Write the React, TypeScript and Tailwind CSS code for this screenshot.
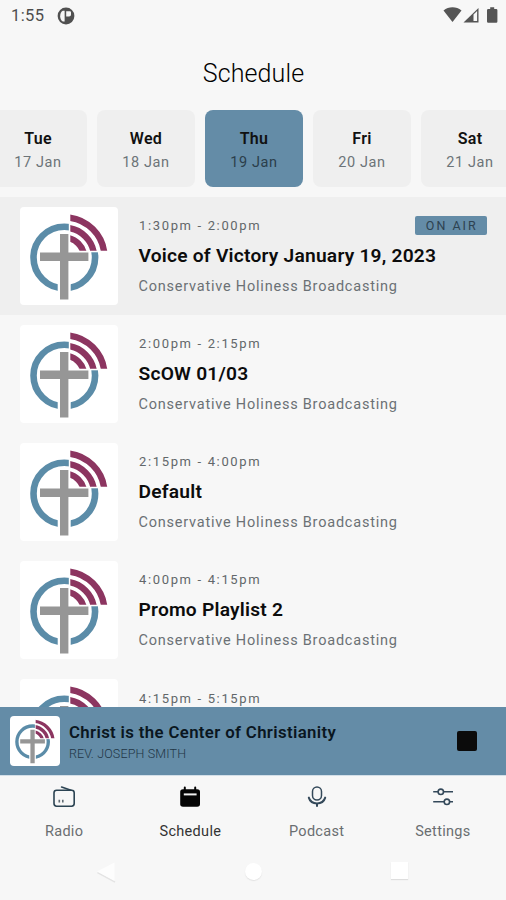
import clsx from "clsx";

const days = [
  { name: "Tue", date: "17 Jan" },
  { name: "Wed", date: "18 Jan" },
  { name: "Thu", date: "19 Jan", active: true },
  { name: "Fri", date: "20 Jan" },
  { name: "Sat", date: "21 Jan" },
];

const shows = [
  { time: "1:30pm - 2:00pm", title: "Voice of Victory January 19, 2023", onAir: true },
  { time: "2:00pm - 2:15pm", title: "ScOW 01/03" },
  { time: "2:15pm - 4:00pm", title: "Default" },
  { time: "4:00pm - 4:15pm", title: "Promo Playlist 2" },
  { time: "4:15pm - 5:15pm" },
];

const tabs = [
  { label: "Radio", icon: RadioIcon },
  { label: "Schedule", icon: ScheduleIcon, active: true },
  { label: "Podcast", icon: PodcastIcon },
  { label: "Settings", icon: SettingsIcon },
];

function Logo({ className }: { className?: string }) {
  return (
    <svg viewBox="0 0 98 98" className={className}>
      <circle cx="44.3" cy="50.5" r="30.8" fill="none" stroke="#5b8ca8" strokeWidth="6.6" />
      <rect x="37.7" y="70" width="13" height="27" fill="#fff" />
      <rect x="48.8" y="2" width="47" height="43.3" fill="#fff" />
      <path d="M40 27h8.4v18.5h20V54h-20v38.6H40V54H20v-8.5h20z" fill="#969696" />
      <svg x="50.3" y="0" width="47" height="43.8" viewBox="50.3 0 47 43.8">
        <g fill="none" stroke="#8c3560" strokeWidth="6.4">
          <circle cx="44.3" cy="50.5" r="40.2" />
          <circle cx="44.3" cy="50.5" r="29.8" />
          <circle cx="44.3" cy="50.5" r="19.8" />
        </g>
      </svg>
    </svg>
  );
}

function RadioIcon() {
  return (
    <svg width="24" height="24" viewBox="0 0 24 24" fill="none" stroke="#2c4453" strokeWidth="1.6">
      <rect x="2" y="5.2" width="20.2" height="16" rx="2.6" />
      <path d="M9.6 2l9.4 3.3" strokeLinecap="round" />
      <path d="M7.3 14.8v2.8M10.8 14.8v2.8" stroke="#5f6b73" />
    </svg>
  );
}

function ScheduleIcon() {
  return (
    <svg width="24" height="24" viewBox="0 0 24 24">
      <path d="M6.8 2.6v4M17.2 2.6v4" stroke="#050505" strokeWidth="2" strokeLinecap="round" />
      <rect x="2.2" y="4.2" width="19.8" height="17.6" rx="2.8" fill="#050505" />
      <path d="M5.8 9.4h12.8" stroke="#f1f1f1" strokeWidth="2" />
    </svg>
  );
}

function PodcastIcon() {
  return (
    <svg width="24" height="24" viewBox="0 0 24 24" fill="none" stroke="#34495a" strokeWidth="1.5">
      <rect x="7.5" y="2" width="9" height="13" rx="4.5" />
      <path d="M3.8 12.6c1.2 4 4.4 5.800 8.200 5.800s7-1.800 8.200-5.800" strokeWidth="2" strokeLinecap="round" />
      <path d="M12 18.6v3.2" strokeWidth="2" />
    </svg>
  );
}

function SettingsIcon() {
  return (
    <svg width="24" height="24" viewBox="0 0 24 24" fill="none" stroke="#34495a" strokeWidth="1.6">
      <path d="M2.2 6.8h4.8M12.6 6.8h9.4" />
      <circle cx="9.8" cy="6.8" r="2.7" />
      <path d="M2.2 16.8h10.8M18.6 16.8h3.4" />
      <circle cx="15.9" cy="16.8" r="2.7" />
    </svg>
  );
}

function StatusBar() {
  return (
    <div className="flex h-8 shrink-0 items-center pr-[7px] pl-[11px] text-[#4d4d4d]">
      <span className="text-[16.5px] tracking-[0.4px]">1:55</span>
      <svg className="-mt-px ml-[13px]" width="18" height="18" viewBox="0 0 18 18">
        <circle cx="9" cy="9" r="8.4" fill="#505050" />
        <path d="M7.6 3.8v10.6H5.8c-1.6-.8-2.6-2.6-2.6-5.2s1-4.6 2.6-5.4z" fill="#f7f7f7" />
        <path d="M9.2 4.2h3.6c.9 0 1.2.6 1.2 1.4v2c0 1.2-.8 2-2 2H9.2z" fill="#f7f7f7" />
      </svg>
      <svg className="-mt-0.5 ml-auto" width="56" height="18" viewBox="0 0 56 18" fill="#555">
        <path d="M.5 4.6C3.2 2.4 6.2 1.3 9.5 1.3s6.3 1.100 9 3.300L9.500 16z" />
        <path d="M20.5 16.5L35.5 2v14.5z" />
        <path d="M30.5 8.5l3.6-3.5v10.1h-3.6z" fill="#f7f7f7" />
        <path d="M44 4.2q0-1.2 1.2-1.2h2V1.2h4V3h2q1.2 0 1.2 1.2v11.3q0 1.2-1.2 1.2h-8q-1.2 0-1.2-1.2z" />
      </svg>
    </div>
  );
}

export default function App() {
  return (
    <div className="flex h-[900px] w-[506px] flex-col overflow-hidden bg-[#f7f7f7] font-[Roboto,sans-serif]">
      <StatusBar />
      <h1 className="h-[77.5px] shrink-0 pt-[24px] pl-px text-center text-[25px] leading-9 font-light tracking-[0.1px] text-black">
        Schedule
      </h1>

      <div className="-ml-[11px] flex h-[87.5px] shrink-0 gap-[10px]">
        {days.map((day) => (
          <div
            key={day.name}
            className={clsx(
              "flex h-[77.5px] w-[98px] shrink-0 flex-col items-center rounded-lg pt-[17px]",
              day.active ? "bg-[#648ca7]" : "bg-[#efefef]"
            )}
          >
            <p className="text-[16px] leading-6 font-semibold tracking-[0.3px] text-[#111]">{day.name}</p>
            <p
              className={clsx(
                "text-[14.5px] leading-6 tracking-[0.6px]",
                day.active ? "text-[#2b3e4b]" : "text-[#6c7478]"
              )}
            >
              {day.date}
            </p>
          </div>
        ))}
      </div>

      <div className="h-[509.5px] shrink-0 overflow-hidden">
        {shows.map((show) => (
          <div
            key={show.time}
            className={clsx("flex h-[118.2px] gap-5 pt-[9.5px] pr-[19px] pl-5", show.onAir && "bg-[#efefef]")}
          >
            <div className="size-[98px] shrink-0 rounded-[4px] bg-white">
              <Logo className="size-full" />
            </div>
            <div className="min-w-0 grow pt-[9px]">
              <div className="flex h-5 items-center justify-between">
                <span className="pl-px text-[13px] tracking-[1.65px] text-[#62676a]">{show.time}</span>
                {show.onAir && (
                  <span className="h-[18.5px] w-[72px] rounded-[2px] bg-[#648ca7] pl-[1.5px] text-center text-[12.5px] leading-[20px] tracking-[2px] text-[#2d4250]">
                    ON AIR
                  </span>
                )}
              </div>
              {show.title && (
                <>
                  <h2 className="mt-[7px] pl-[0.5px] text-[19.2px] leading-[26px] font-semibold tracking-[0.22px] whitespace-nowrap text-[#0c0c0c]">
                    {show.title}
                  </h2>
                  <p className="mt-[7px] pl-[0.5px] text-[14.5px] leading-[22px] tracking-[0.78px] whitespace-nowrap text-[#6b7175]">
                    Conservative Holiness Broadcasting
                  </p>
                </>
              )}
            </div>
          </div>
        ))}
      </div>

      <div className="flex h-[68px] shrink-0 items-center bg-[#648ca7] pr-[29px] pl-[10px]">
        <div className="size-[50px] rounded-[4px] bg-white">
          <Logo className="size-full" />
        </div>
        <div className="ml-[9px] pt-[3px]">
          <p className="text-[16.8px] leading-6 font-semibold tracking-[0.35px] text-[#0a1620]">
            Christ is the Center of Christianity
          </p>
          <p className="text-[12.5px] leading-5 font-light tracking-[0.15px] text-[#1f3545]">REV. JOSEPH SMITH</p>
        </div>
        <div className="ml-auto size-5 rounded-[2px] bg-[#0b0b0b]" />
      </div>

      <nav className="grid h-[72.5px] shrink-0 grid-cols-4 border-t border-[#d3dfe8] pt-[9px] pl-px">
        {tabs.map((tab) => (
          <div key={tab.label} className="flex flex-col items-center">
            <tab.icon />
            <span
              className={clsx(
                "mt-[11.5px] text-[14.5px] leading-6 tracking-[0.3px]",
                tab.active ? "text-[#333]" : "text-[#6a6e71]"
              )}
            >
              {tab.label}
            </span>
          </div>
        ))}
      </nav>

      <div className="flex grow items-start justify-between px-[96px] pt-[14px]">
        <svg width="20" height="22" viewBox="0 0 20 22">
          <path d="M1.5 11.5L19 21" stroke="#e4e4e4" strokeWidth="1.5" />
          <path d="M1 10.5L18.5 1.5V20z" fill="#fdfdfd" />
        </svg>
        <div className="mt-[2px] size-[17px] rounded-full bg-white shadow-[0_1px_1px_#e2e2e2]" />
        <div className="mt-[1px] mr-[2px] size-[17px] bg-white shadow-[0_1px_1px_#dedede]" />
      </div>
    </div>
  );
}
